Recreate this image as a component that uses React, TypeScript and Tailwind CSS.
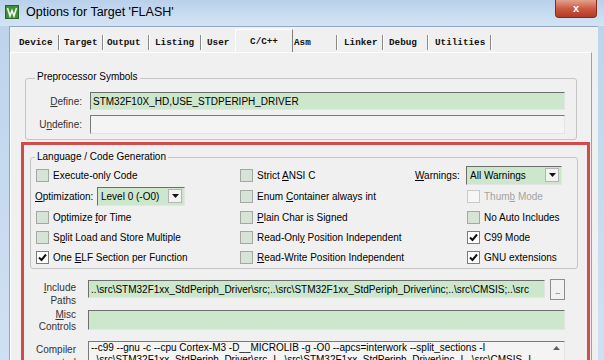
import React from 'react';

// Options for Target 'FLASH' — Keil µVision C/C++ tab

const INCLUDE = String.raw`..\src\STM32F1xx_StdPeriph_Driver\src;..\src\STM32F1xx_StdPeriph_Driver\inc;..\src\CMSIS;..\src`;
const CTRL1 = String.raw`--c99 --gnu -c --cpu Cortex-M3 -D__MICROLIB -g -O0 --apcs=interwork --split_sections -I`;
const CTRL2 = String.raw`..\src\STM32F1xx_StdPeriph_Driver\src -I ..\src\STM32F1xx_StdPeriph_Driver\inc -I ..\src\CMSIS -I`;

const TABS = [
  { label: 'Device', w: 'w-[46px] pl-[6px]' },
  { label: 'Target', w: 'w-[44px] pl-[5px]' },
  { label: 'Output', w: 'w-[46px] pl-[4px]' },
  { label: 'Listing', w: 'w-[52px] pl-[6px]' },
  { label: 'User', w: 'w-[34px] pl-[6px] border-r-0' },
  { label: 'C/C++', w: '', active: true },
  { label: 'Asm', w: 'w-[44px] pl-[1px]' },
  { label: 'Linker', w: 'w-[46px] pl-[7px]' },
  { label: 'Debug', w: 'w-[45px] pl-[6px]' },
  { label: 'Utilities', w: 'w-[63px] pl-[7px]' },
];

function U({ children }: { children: React.ReactNode }) {
  return <span className="underline underline-offset-[1px] decoration-[1px]">{children}</span>;
}

function Check({ checked, disabled }: { checked?: boolean; disabled?: boolean }) {
  const cls = checked
    ? 'bg-white border-[#7c7c7c]'
    : disabled
    ? 'bg-[#f6f6f6] border-[#c9c9c9]'
    : 'bg-[#d7e3d7] border-[#a3a8a3]';
  return (
    <span className={`w-[13px] h-[13px] shrink-0 border flex items-center justify-center ${cls}`}>
      {checked && (
        <svg width="9" height="9" viewBox="0 0 9 9">
          <path d="M1 4.5 L3.5 7 L8 1.5" fill="none" stroke="#111" strokeWidth="2" />
        </svg>
      )}
    </span>
  );
}

function Opt({ children, checked, disabled }: { children: React.ReactNode; checked?: boolean; disabled?: boolean }) {
  return (
    <div className="flex items-center gap-[4px]">
      <Check checked={checked} disabled={disabled} />
      <span className={disabled ? 'text-[#a3a3a3]' : ''}>{children}</span>
    </div>
  );
}

function Arrow() {
  return (
    <svg width="7" height="4" viewBox="0 0 7 4">
      <path d="M0 0 H7 L3.5 4 Z" fill="#111" />
    </svg>
  );
}

function Select({ value, w }: { value: string; w: string }) {
  return (
    <div className={`${w} h-[19px] flex items-center bg-[#cde7cd] border border-t-[#6e6e6e] border-l-[#6e6e6e] border-r-[#e4e4e4] border-b-[#e4e4e4] pl-[3px] pr-[2px]`}>
      <span className="flex-1 truncate">{value}</span>
      <span className="w-[14px] h-[14px] flex items-center justify-center bg-[#f2f2f2] border border-[#b5b5b5]">
        <Arrow />
      </span>
    </div>
  );
}

function TitleBar() {
  return (
    <div className="h-[26px] shrink-0 flex items-start bg-gradient-to-b from-[#b8d0ea] via-[#c7dbf0] to-[#d3e3f3]">
      <svg className="mt-[5px] ml-[5px]" width="14" height="14" viewBox="0 0 14 14">
        <rect x="0.5" y="0.5" width="13" height="13" fill="#3f8f3a" stroke="#27632a" />
        <path d="M2.5 3 L5 11 L7 5.5 L9 11 L11.5 3" fill="none" stroke="#f3f7e8" strokeWidth="1.6" />
      </svg>
      <div className="ml-[7px] mt-[4px] leading-[16px] text-[12.5px] text-black">Options for Target 'FLASH'</div>
      <div className="ml-auto mr-[7px] w-[42px] h-[18px] rounded-b-[4px] border border-t-0 border-[#8a2a1c] bg-gradient-to-b from-[#e4a08f] via-[#cc5a43] to-[#b23a24] flex items-center justify-center">
        <span className="text-white text-[11px] font-bold leading-none">x</span>
      </div>
    </div>
  );
}

function Tabs() {
  return (
    <div className="h-[25px] shrink-0 flex items-start pl-[3px] font-['Liberation_Mono',monospace] text-[9.3px] font-bold text-[#111]">
      {TABS.map((t) =>
        t.active ? (
          <div key={t.label} className="w-[58px] h-[23px] mt-[2px] pt-[5px] leading-[14px] text-center border-t border-l border-white border-r border-r-[#7f7f7f]">
            {t.label}
          </div>
        ) : (
          <div key={t.label} className={`${t.w} h-[15px] mt-[8px] leading-[15px] border-r border-[#8a8a8a] shadow-[1px_0_0_#ffffff]`}>
            {t.label}
          </div>
        )
      )}
    </div>
  );
}

export default function App() {
  return (
    <div className="w-[604px] h-[360px] overflow-hidden flex flex-col bg-gradient-to-b from-[#bcd3ec] to-[#cfe0f2] font-['Liberation_Sans',Arial,sans-serif] text-[10px] text-black">
      <TitleBar />
      <div className="flex-1 min-h-0 ml-[9px] mr-[6px] flex flex-col bg-[#f0f0f0] border-l border-t border-[#93a7c0]">
        <Tabs />
        <div className="flex-1 min-h-0 w-[582px] overflow-hidden flex flex-col border-t border-l border-white border-r border-r-[#a0a0a0]">
          {/* Preprocessor Symbols */}
          <div className="ml-[14px] mt-[25px] w-[552px] h-[62px] shrink-0 relative border border-[#c4c4c4] rounded-[3px] pt-[13px]">
            <div className="absolute left-[9px] -top-[8px] px-[2px] leading-[12px] bg-[#f0f0f0]">Preprocessor Symbols</div>
            <div className="flex items-center">
              <div className="w-[56px] text-right text-[#333]"><U>D</U>efine:</div>
              <div className="ml-[8px] w-[475px] h-[18px] flex items-center pl-[2px] bg-[#cde7cd] border border-t-[#6e6e6e] border-l-[#6e6e6e] border-r-[#e4e4e4] border-b-[#e4e4e4]">
                STM32F10X_HD,USE_STDPERIPH_DRIVER
              </div>
            </div>
            <div className="flex items-center mt-[5px]">
              <div className="w-[56px] text-right text-[#333]">U<U>n</U>define:</div>
              <div className="ml-[8px] w-[475px] h-[19px] bg-[#f4f4f4] border border-t-[#7a7a7a] border-l-[#7a7a7a] border-r-[#e4e4e4] border-b-[#e4e4e4]" />
            </div>
          </div>

          {/* red annotation frame */}
          <div className="ml-[10px] mt-[2px] w-[569px] h-[240px] shrink-0 border-[3px] border-[#d34c4c] flex flex-col">
            {/* Language / Code Generation */}
            <div className="ml-[6px] mt-[12px] w-[548px] h-[112px] shrink-0 relative border border-[#c4c4c4] rounded-[3px] pt-[7px] pl-[5px]">
              <div className="absolute left-[4px] -top-[7px] px-[2px] leading-[12px] bg-[#f0f0f0]">Language / Code Generation</div>
              <div className="grid grid-cols-[204px_175px_1fr] grid-rows-[20px_22px_20px_20px_20px] items-center">
                <Opt>Execute-only Code</Opt>
                <Opt>Strict <U>A</U>NSI C</Opt>
                <div className="flex items-center">
                  <div className="w-[51px]"><U>W</U>arnings:</div>
                  <Select value="All Warnings" w="w-[96px]" />
                </div>

                <div className="flex items-center -ml-[1px]">
                  <div className="w-[62px]"><U>O</U>ptimization:</div>
                  <Select value="Level 0 (-O0)" w="w-[88px]" />
                </div>
                <Opt>Enum <U>C</U>ontainer always int</Opt>
                <div className="pl-[52px]"><Opt disabled>Thum<U>b</U> Mode</Opt></div>

                <Opt>Optimize <U>f</U>or Time</Opt>
                <Opt><U>P</U>lain Char is Signed</Opt>
                <div className="pl-[52px]"><Opt>No Auto Includes</Opt></div>

                <Opt>S<U>p</U>lit Load and Store Multiple</Opt>
                <Opt>Read-Onl<U>y</U> Position Independent</Opt>
                <div className="pl-[52px]"><Opt checked>C99 Mode</Opt></div>

                <Opt checked>One <U>E</U>LF Section per Function</Opt>
                <Opt><U>R</U>ead-Write Position Independent</Opt>
                <div className="pl-[52px]"><Opt checked>GNU extensions</Opt></div>
              </div>
            </div>

            {/* Include Paths */}
            <div className="flex items-start mt-[11px]">
              <div className="w-[52px] pt-[1px] leading-[13px] text-right text-[#333]">
                <U>I</U>nclude<br />Paths
              </div>
              <div className="ml-[12px] w-[457px] h-[18px] flex items-center pl-[2px] overflow-hidden whitespace-nowrap bg-[#cde7cd] border border-t-[#6e6e6e] border-l-[#6e6e6e] border-r-[#e4e4e4] border-b-[#e4e4e4]">
                {INCLUDE}
              </div>
              <div className="ml-[5px] -mt-[1px] w-[15px] h-[21px] flex items-end justify-center pb-[4px] leading-none bg-[#f2f2f2] border border-[#8d8d8d] text-[7px] tracking-[-0.5px]">
                ...
              </div>
            </div>

            {/* Misc Controls */}
            <div className="flex items-start mt-[3px]">
              <div className="w-[52px] -mt-[1px] leading-[12px] text-right text-[#333]">
                <U>M</U>isc<br />Controls
              </div>
              <div className="ml-[12px] w-[477px] h-[20px] bg-[#cde7cd] border border-t-[#6e6e6e] border-l-[#6e6e6e] border-r-[#e4e4e4] border-b-[#e4e4e4]" />
            </div>

            {/* Compiler control string */}
            <div className="flex items-start mt-[8px]">
              <div className="w-[52px] pt-[2px] leading-[13px] text-right text-[#333]">
                Compiler<br />control<br />string
              </div>
              <div className="ml-[12px] w-[477px] h-[40px] flex bg-[#f4f4f4] border border-t-[#7a7a7a] border-l-[#7a7a7a] border-r-[#e4e4e4] border-b-[#e4e4e4]">
                <div className="flex-1 pl-[2px] leading-[12px] overflow-hidden whitespace-nowrap">
                  <div>{CTRL1}</div>
                  <div>{CTRL2}</div>
                </div>
                <div className="w-[16px] flex justify-center pt-[4px]">
                  <svg width="7" height="4" viewBox="0 0 7 4">
                    <path d="M0 4 H7 L3.5 0 Z" fill="#606060" />
                  </svg>
                </div>
              </div>
            </div>
          </div>
        </div>
      </div>
    </div>
  );
}
